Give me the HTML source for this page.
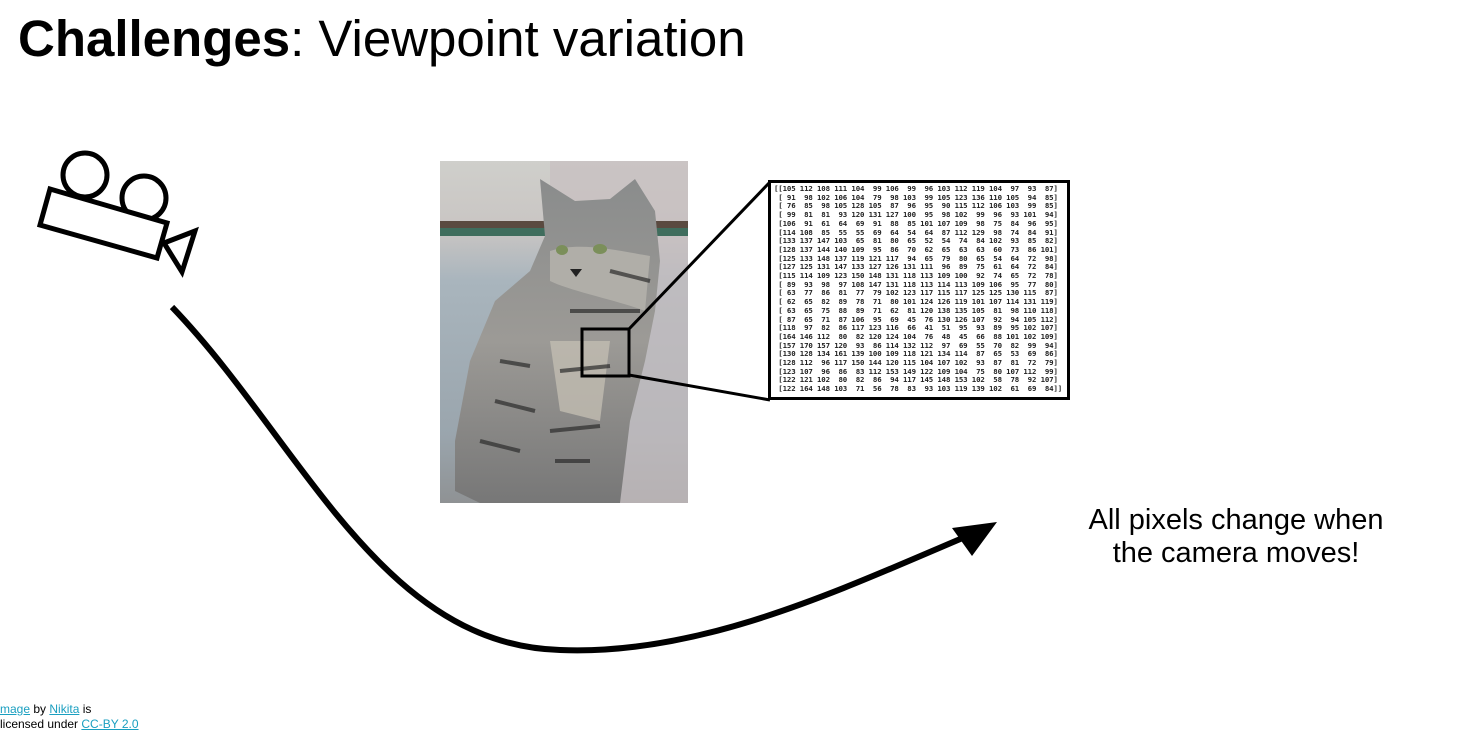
<!DOCTYPE html>
<html><head><meta charset="utf-8"><style>
body{margin:0;width:1467px;height:723px;background:#fff;position:relative;overflow:hidden;font-family:"Liberation Sans",Arial,sans-serif}
#t{position:absolute;left:18px;top:9px;font-size:51px;line-height:60px;white-space:nowrap}
#mat{position:absolute;left:768px;top:180px;width:296px;height:214px;border:3px solid #000;background:#fff}
#mat pre{margin:2px 0 0 3px;font-family:"DejaVu Sans Mono","Liberation Mono",monospace;font-size:7.4px;line-height:8.7px;color:#222;font-weight:bold;letter-spacing:-0.15px}
#txt{position:absolute;left:1036px;top:504px;width:400px;text-align:center;font-size:29px;line-height:33px}
#cr{position:absolute;left:0;top:702px;font-size:12px;line-height:15px;white-space:nowrap}
#cr a{color:#1a9fc0;text-decoration:underline}
</style></head><body>
<div id="t"><b>Challenges</b>: Viewpoint variation</div>
<svg width="1467" height="723" style="position:absolute;left:0;top:0">
<g fill="none" stroke="#000" stroke-width="5" stroke-linejoin="miter">
<circle cx="85" cy="175" r="22"/>
<circle cx="144" cy="198" r="22"/>
<polygon points="50,189 167,223 157,258 40,225" fill="#fff"/>
<polygon points="164,243 195,231 182,272"/>
</g>
<path d="M172,307 C300,440 380,645 560,650 C700,656 840,590 965,537" fill="none" stroke="#000" stroke-width="6"/>
<polygon points="997,522 952,528 972,556" fill="#000"/>
<defs>
<linearGradient id="bg" x1="0" y1="0" x2="0" y2="1">
<stop offset="0" stop-color="#cfcfcb"/><stop offset="0.2" stop-color="#c9c5c3"/><stop offset="0.35" stop-color="#a9b5bd"/><stop offset="0.8" stop-color="#9aa5ad"/><stop offset="1" stop-color="#8f9294"/></linearGradient>
<linearGradient id="cat" x1="0" y1="0" x2="0" y2="1">
<stop offset="0" stop-color="#8a8c8c"/><stop offset="0.5" stop-color="#9c9a96"/><stop offset="1" stop-color="#777"/></linearGradient>
</defs>
<g transform="translate(440,161)">
<rect width="248" height="342" fill="url(#bg)"/>
<rect x="110" y="0" width="138" height="342" fill="#c7bfc0" opacity="0.7"/>
<rect x="0" y="60" width="248" height="7" fill="#5a4a40"/>
<rect x="0" y="67" width="248" height="8" fill="#3f6d5d"/>
<path d="M100,18 L135,40 L170,38 L195,18 L215,50 L220,100 L215,150 L205,200 L190,260 L180,342 L40,342 L15,330 L15,280 L30,200 L55,140 L90,110 L105,75 Z" fill="url(#cat)"/>
<path d="M110,90 C140,80 180,90 210,95 L205,150 C180,140 130,130 110,120 Z" fill="#b0aea8"/>
<path d="M110,180 L170,180 L160,260 L120,250 Z" fill="#c2bdb2" opacity="0.8"/>
<g stroke="#2c2c2c" stroke-width="4" fill="none" opacity="0.7">
<path d="M60,200 L90,205"/><path d="M55,240 L95,250"/><path d="M40,280 L80,290"/><path d="M120,210 L170,205"/><path d="M110,270 L160,265"/><path d="M115,300 L150,300"/><path d="M130,150 L200,150"/><path d="M170,110 L210,120"/>
</g>
<ellipse cx="122" cy="89" rx="6" ry="5" fill="#7b8f5a"/><ellipse cx="160" cy="88" rx="7" ry="5" fill="#7b8f5a"/>
<path d="M130,108 L142,108 L136,116 Z" fill="#222"/>
<rect x="142" y="168" width="47" height="47" fill="none" stroke="#000" stroke-width="3"/>
</g>
<line x1="629" y1="329" x2="770" y2="182" stroke="#000" stroke-width="3"/>
<line x1="629" y1="375" x2="770" y2="400" stroke="#000" stroke-width="3"/>
</svg>
<div id="mat"><pre>[[105 112 108 111 104  99 106  99  96 103 112 119 104  97  93  87]
 [ 91  98 102 106 104  79  98 103  99 105 123 136 110 105  94  85]
 [ 76  85  98 105 128 105  87  96  95  90 115 112 106 103  99  85]
 [ 99  81  81  93 120 131 127 100  95  98 102  99  96  93 101  94]
 [106  91  61  64  69  91  88  85 101 107 109  98  75  84  96  95]
 [114 108  85  55  55  69  64  54  64  87 112 129  98  74  84  91]
 [133 137 147 103  65  81  80  65  52  54  74  84 102  93  85  82]
 [128 137 144 140 109  95  86  70  62  65  63  63  60  73  86 101]
 [125 133 148 137 119 121 117  94  65  79  80  65  54  64  72  98]
 [127 125 131 147 133 127 126 131 111  96  89  75  61  64  72  84]
 [115 114 109 123 150 148 131 118 113 109 100  92  74  65  72  78]
 [ 89  93  98  97 108 147 131 118 113 114 113 109 106  95  77  80]
 [ 63  77  86  81  77  79 102 123 117 115 117 125 125 130 115  87]
 [ 62  65  82  89  78  71  80 101 124 126 119 101 107 114 131 119]
 [ 63  65  75  88  89  71  62  81 120 138 135 105  81  98 110 118]
 [ 87  65  71  87 106  95  69  45  76 130 126 107  92  94 105 112]
 [118  97  82  86 117 123 116  66  41  51  95  93  89  95 102 107]
 [164 146 112  80  82 120 124 104  76  48  45  66  88 101 102 109]
 [157 170 157 120  93  86 114 132 112  97  69  55  70  82  99  94]
 [130 128 134 161 139 100 109 118 121 134 114  87  65  53  69  86]
 [128 112  96 117 150 144 120 115 104 107 102  93  87  81  72  79]
 [123 107  96  86  83 112 153 149 122 109 104  75  80 107 112  99]
 [122 121 102  80  82  86  94 117 145 148 153 102  58  78  92 107]
 [122 164 148 103  71  56  78  83  93 103 119 139 102  61  69  84]]</pre></div>
<div id="txt">All pixels change when<br>the camera moves!</div>
<div id="cr"><a>mage</a> by <a>Nikita</a> is<br>licensed under <a>CC-BY 2.0</a></div>
</body></html>
